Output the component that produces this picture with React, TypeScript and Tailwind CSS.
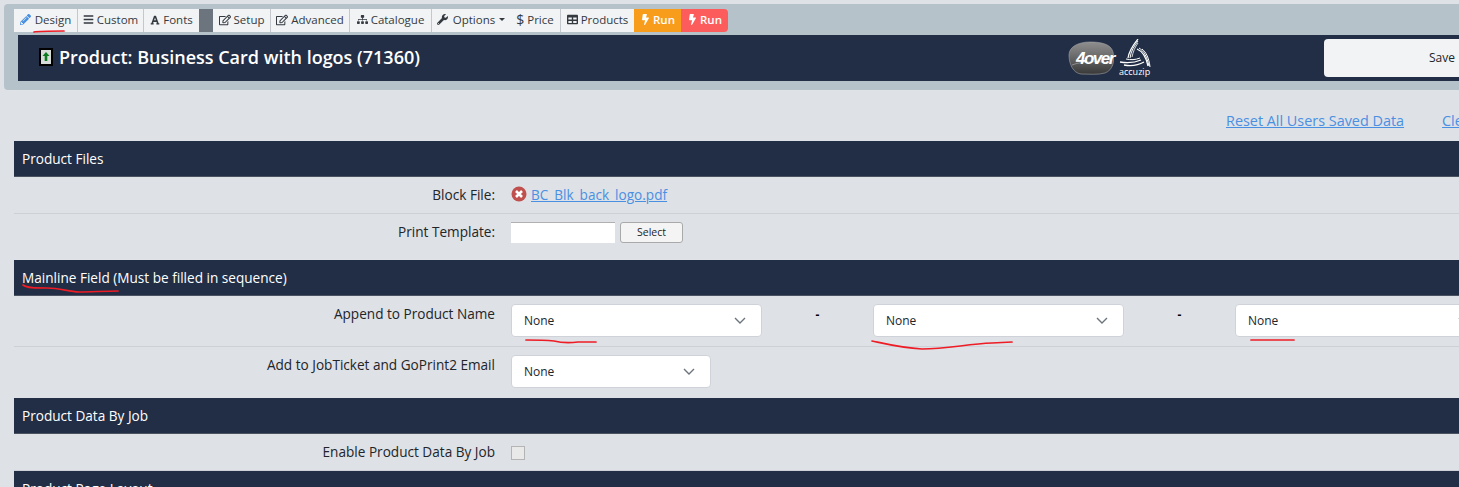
import React from 'react';
import { FaPencilAlt, FaBars, FaFont, FaRegEdit, FaSitemap, FaWrench, FaTable, FaBolt } from 'react-icons/fa';

const ToolButton: React.FC<{ icon: React.ReactNode; label: string; width: string; caret?: boolean; border?: boolean }> = ({ icon, label, width, caret, border = true }) => (
  <div className={`${width} h-[23px] shrink-0 flex items-center justify-center gap-[3px] pb-[2px] bg-[#f1f3f5] text-[11.5px] text-[#343a40] ${border ? 'border-r border-[#c4c8cc]' : ''}`}>
    {icon}
    <span>{label}</span>
    {caret && <span className="ml-[1px] w-0 h-0 border-x-[3px] border-x-transparent border-t-[3px] border-t-[#343a40]" />}
  </div>
);

const SectionHeader: React.FC<{ title: string; height: string }> = ({ title, height }) => (
  <div className={`${height} flex items-center pl-2 pt-[2px] bg-[#222e46] border-b border-[#4a5160] text-[13.6px] text-white`}>{title}</div>
);

const Row: React.FC<{ label: string; height: string; children?: React.ReactNode }> = ({ label, height, children }) => (
  <div className={`${height} flex items-center pt-[1px] border-b border-[#cdd1d7]`}>
    <div className="w-[481px] shrink-0 text-right text-[13.6px] text-[#212529]">{label}</div>
    <div className="ml-4 flex items-center">{children}</div>
  </div>
);

const SelectBox: React.FC<{ width: string }> = ({ width }) => (
  <div className={`${width} h-[33px] shrink-0 flex items-center justify-between pl-[12px] pr-[15px] bg-white border border-[#cfd3d9] rounded-[4px] text-[12px] text-[#212529]`}>
    <span>None</span>
    <svg width="12" height="7" viewBox="0 0 12 7" fill="none" stroke="#6c757d" strokeWidth="1.4">
      <path d="M1 1l5 5 5-5" />
    </svg>
  </div>
);

const Dash = () => <div className="w-[111px] shrink-0 -mt-3 text-center text-[12px] font-bold text-black">-</div>;

const FourOverLogo = () => (
  <div className="relative w-[46px] h-[35px] shrink-0">
    <svg className="absolute inset-0" width="46" height="35" viewBox="0 0 46 35">
      <defs>
        <linearGradient id="blob" x1="0" y1="0" x2="0" y2="1">
          <stop offset="0" stopColor="#8f8f8f" />
          <stop offset="0.45" stopColor="#6a6a6a" />
          <stop offset="1" stopColor="#383838" />
        </linearGradient>
      </defs>
      <path d="M1 14C1 6 10 1 22 1c11 0 21 2 23 10 2 9 0 18-8 21-7 2-16 1-24 1C5 32 1 23 1 14z" fill="url(#blob)" stroke="#a5a5a5" strokeWidth="0.6" />
      <path d="M4 24c10-4 26-4 39-2" stroke="#9a9a9a" strokeWidth="0.8" fill="none" />
    </svg>
    <span className="absolute left-[8px] top-[9px] text-[17px] leading-[17px] font-bold italic tracking-[-1.5px] text-white font-['Liberation_Sans',sans-serif]">4over</span>
  </div>
);

const AccuzipLogo = () => (
  <div className="relative w-[34px] h-[38px] shrink-0">
    <svg className="absolute inset-0" width="34" height="30" viewBox="0 0 34 30" fill="none" stroke="#ffffff">
      <path d="M9 19C10 12 14 6 19 0" strokeWidth="1.2" />
      <path d="M11 19C12 12 15 7 19 2" strokeWidth="1" />
      <path d="M13 18C14 13 16 8 19 4" strokeWidth="0.8" />
      <path d="M18 10c5 2 9 8 11 17" strokeWidth="1.2" />
      <path d="M20 9c5 3 8 9 10 18" strokeWidth="1" />
      <path d="M23 10c4 3 7 9 8 18" strokeWidth="1" />
      <path d="M1 23c7 1 14 1 21-2" strokeWidth="1.3" />
      <path d="M5 26c6 1 13 1 20-3" strokeWidth="1.3" />
      <path d="M7 20c5 1 9 1 14-1" strokeWidth="1" />
    </svg>
    <span className="absolute left-0 bottom-0 text-[9px] leading-[10px] text-white">accuzip</span>
  </div>
);

const Annotations = () => (
  <svg className="absolute inset-0 pointer-events-none" width="1459" height="487" viewBox="0 0 1459 487" fill="none" stroke="#ee1c25" strokeWidth="1.7" strokeLinecap="round">
    <path d="M34 32c5-1 17-1 30-1" />
    <path d="M23 285c4 3 12 3 24 3 12 0 20 3 32 4 12 0 26-1 39-1" />
    <path d="M526 340c10 0 18 0 28 1 8 2 16 2 24 1l18 0" />
    <path d="M872 341c14 3 30 7 50 8 25 0 45-5 70-6l20-1" />
    <path d="M1251 340l43 0" />
  </svg>
);

export default function App() {
  return (
    <div className="relative w-[1459px] h-[487px] overflow-hidden bg-[#dee1e6] font-['Open_Sans',sans-serif]">
      {/* top panel */}
      <div className="ml-1 mt-1 w-[1500px] h-[86px] pt-[5px] bg-[#b5c2c9] rounded-[4px]">
        <div className="ml-[10px] flex">
          <ToolButton width="w-[64px]" label="Design" icon={<FaPencilAlt size={11} color="#4a90e2" className="mr-[1px]" />} />
          <ToolButton width="w-[66px]" label="Custom" icon={<FaBars size={11} />} />
          <ToolButton width="w-[55px]" label="Fonts" icon={<FaFont size={10} />} border={false} />
          <div className="w-[14px] h-[23px] shrink-0 bg-[#6c757d]" />
          <ToolButton width="w-[58px]" label="Setup" icon={<FaRegEdit size={12} />} />
          <ToolButton width="w-[79px]" label="Advanced" icon={<FaRegEdit size={12} />} />
          <ToolButton width="w-[82px]" label="Catalogue" icon={<FaSitemap size={11} />} />
          <ToolButton width="w-[78px]" label="Options" icon={<FaWrench size={11} className="mr-[2px]" />} caret border={false} />
          <ToolButton width="w-[51px]" label="Price" icon={<span className="text-[14px] leading-none">$</span>} />
          <ToolButton width="w-[73px]" label="Products" icon={<FaTable size={11} />} border={false} />
          <div className="w-[47px] h-[23px] shrink-0 flex items-center justify-center gap-[2px] pb-[2px] bg-[#f89c1c] text-[11.5px] font-semibold text-white">
            <FaBolt size={11} />
            <span>Run</span>
          </div>
          <div className="w-[47px] h-[23px] shrink-0 flex items-center justify-center gap-[2px] pb-[2px] bg-[#fc5c5c] rounded-r-[4px] text-[11.5px] font-semibold text-white">
            <FaBolt size={11} />
            <span>Run</span>
          </div>
        </div>

        <div className="ml-[14px] mt-[3px] h-[46px] flex items-center bg-[#222e46]">
          <svg className="ml-[21px] mb-[2px] shrink-0" width="14" height="18" viewBox="0 0 14 18">
            <rect width="14" height="18" fill="#000" />
            <rect x="2" y="2" width="10" height="14" fill="#d8dcd8" />
            <path d="M7 4l3.5 4H8.300v5H5.700V8H3.500z" fill="#0a7a1f" />
          </svg>
          <div className="ml-[6px] mb-[2px] w-[1009px] shrink-0 text-[18px] font-semibold text-white">Product: Business Card with logos (71360)</div>
          <FourOverLogo />
          <div className="ml-[5px]">
            <AccuzipLogo />
          </div>
          <div className="ml-[171px] w-[236px] h-[38px] shrink-0 flex items-center justify-center bg-[#f1f3f5] rounded-[4px] text-[12px] text-[#212529]">Save</div>
        </div>
      </div>

      {/* links */}
      <div className="h-[51px] pt-[20px] pl-[1226px] flex gap-[38px] whitespace-nowrap text-[14.4px] text-[#4a90e2] underline">
        <span>Reset All Users Saved Data</span>
        <span>Clear</span>
      </div>

      {/* form table */}
      <div className="ml-[14px] w-[1460px]">
        <SectionHeader title="Product Files" height="h-[36px]" />
        <Row label="Block File:" height="h-[37px]">
          <svg className="-mt-[3px]" width="16" height="16" viewBox="0 0 16 16">
            <circle cx="8" cy="8" r="7.5" fill="#c0504d" />
            <path d="M5 5l6 6M11 5l-6 6" stroke="#fff" strokeWidth="2.6" />
          </svg>
          <span className="ml-1 text-[13.6px] text-[#4a90e2] underline">BC_Blk_back_logo.pdf</span>
        </Row>
        <div className="h-[46px] flex items-start pt-[8px]">
          <div className="w-[481px] shrink-0 text-right text-[13.6px] text-[#212529]">Print Template:</div>
          <div className="ml-4 flex items-center">
            <div className="w-[104px] h-[21px] bg-white border-t border-[#b0b0b0]" />
            <div className="ml-[5px] w-[63px] h-[21px] flex items-center justify-center bg-[#f4f4f4] border border-[#a9a9a9] rounded-[3px] text-[10.5px] text-[#212529]">Select</div>
          </div>
        </div>
        <SectionHeader title="Mainline Field (Must be filled in sequence)" height="h-[36px]" />
        <div className="h-[51px] flex items-start border-b border-[#cdd1d7]">
          <div className="w-[481px] shrink-0 pt-[8px] text-right text-[13.6px] text-[#212529]">Append to Product Name</div>
          <div className="ml-4 pt-[8px] flex items-center">
            <SelectBox width="w-[251px]" />
            <Dash />
            <SelectBox width="w-[251px]" />
            <Dash />
            <SelectBox width="w-[251px]" />
          </div>
        </div>
        <div className="h-[51px] flex items-start">
          <div className="w-[481px] shrink-0 pt-[8px] text-right text-[13.6px] text-[#212529]">Add to JobTicket and GoPrint2 Email</div>
          <div className="ml-4 pt-[8px]">
            <SelectBox width="w-[200px]" />
          </div>
        </div>
        <SectionHeader title="Product Data By Job" height="h-[36px]" />
        <Row label="Enable Product Data By Job" height="h-[37px]">
          <div className="w-[14px] h-[14px] bg-[#e9e9e9] border border-[#b4b4b4]" />
        </Row>
        <SectionHeader title="Product Page Layout" height="h-[36px]" />
      </div>

      <Annotations />
    </div>
  );
}
